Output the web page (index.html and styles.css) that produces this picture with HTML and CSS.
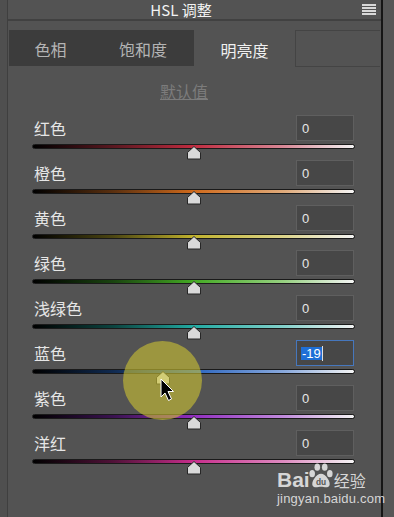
FILE: index.html
```html
<!DOCTYPE html>
<html lang="zh">

<head>
    <meta charset="UTF-8">
    <title>HSL 调整</title>
    <link rel="stylesheet" href="styles.css">
</head>

<body>
    <div class="frame">
        <div class="edge-left"></div>
        <div class="panel">
            <div class="title-bar">
                <span class="title">HSL 调整</span>
                <svg class="menu-icon" width="14" height="11" viewBox="0 0 14 11">
                    <rect x="0" y="0" width="14" height="2" fill="#d8d8d8"/>
                    <rect x="0" y="3" width="14" height="2" fill="#d8d8d8"/>
                    <rect x="0" y="6" width="14" height="2" fill="#d8d8d8"/>
                    <rect x="0" y="9" width="14" height="2" fill="#d8d8d8"/>
                </svg>
            </div>
            <div class="tabs">
                <div class="tab tab-hue">色相</div>
                <div class="tab tab-sat">饱和度</div>
                <div class="tab tab-lum active">明亮度</div>
                <div class="tab-fill"></div>
            </div>
            <div class="defaults"><span>默认值</span></div>
            <div class="rows">
                <div class="row">
                    <div class="row-head"><label>红色</label><div class="value">0</div></div>
                    <div class="slider">
                        <div class="track red"></div>
                        <svg class="thumb" style="left: 50%" width="15" height="14" viewBox="0 0 15 14"><polygon points="7.5,0.5 14,6.5 14,13 1,13 1,6.5" fill="#d9d9d9" stroke="#262626"/></svg>
                    </div>
                </div>
                <div class="row">
                    <div class="row-head"><label>橙色</label><div class="value">0</div></div>
                    <div class="slider">
                        <div class="track orange"></div>
                        <svg class="thumb" style="left: 50%" width="15" height="14" viewBox="0 0 15 14"><polygon points="7.5,0.5 14,6.5 14,13 1,13 1,6.5" fill="#d9d9d9" stroke="#262626"/></svg>
                    </div>
                </div>
                <div class="row">
                    <div class="row-head"><label>黄色</label><div class="value">0</div></div>
                    <div class="slider">
                        <div class="track yellow"></div>
                        <svg class="thumb" style="left: 50%" width="15" height="14" viewBox="0 0 15 14"><polygon points="7.5,0.5 14,6.5 14,13 1,13 1,6.5" fill="#d9d9d9" stroke="#262626"/></svg>
                    </div>
                </div>
                <div class="row">
                    <div class="row-head"><label>绿色</label><div class="value">0</div></div>
                    <div class="slider">
                        <div class="track green"></div>
                        <svg class="thumb" style="left: 50%" width="15" height="14" viewBox="0 0 15 14"><polygon points="7.5,0.5 14,6.5 14,13 1,13 1,6.5" fill="#d9d9d9" stroke="#262626"/></svg>
                    </div>
                </div>
                <div class="row">
                    <div class="row-head"><label>浅绿色</label><div class="value">0</div></div>
                    <div class="slider">
                        <div class="track aqua"></div>
                        <svg class="thumb" style="left: 50%" width="15" height="14" viewBox="0 0 15 14"><polygon points="7.5,0.5 14,6.5 14,13 1,13 1,6.5" fill="#d9d9d9" stroke="#262626"/></svg>
                    </div>
                </div>
                <div class="row">
                    <div class="row-head"><label>蓝色</label><div class="value editing"><span class="selected">-19</span><span class="caret"></span></div></div>
                    <div class="slider">
                        <div class="track blue"></div>
                        <svg class="thumb" style="left: 40.5%" width="15" height="14" viewBox="0 0 15 14"><polygon points="7.5,0.5 14,6.5 14,13 1,13 1,6.5" fill="#d9d9d9" stroke="#262626"/></svg>
                        <div class="click-spot"></div>
                        <svg class="cursor" width="15" height="24" viewBox="0 0 15 24">
                            <path d="M1 1 V19 L5 15 L8.5 22.5 L11.5 21 L8 13.5 H13.5 Z" fill="#000" stroke="#fff" stroke-width="1"/>
                        </svg>
                    </div>
                </div>
                <div class="row">
                    <div class="row-head"><label>紫色</label><div class="value">0</div></div>
                    <div class="slider">
                        <div class="track purple"></div>
                        <svg class="thumb" style="left: 50%" width="15" height="14" viewBox="0 0 15 14"><polygon points="7.5,0.5 14,6.5 14,13 1,13 1,6.5" fill="#d9d9d9" stroke="#262626"/></svg>
                    </div>
                </div>
                <div class="row">
                    <div class="row-head"><label>洋红</label><div class="value">0</div></div>
                    <div class="slider">
                        <div class="track magenta"></div>
                        <svg class="thumb" style="left: 50%" width="15" height="14" viewBox="0 0 15 14"><polygon points="7.5,0.5 14,6.5 14,13 1,13 1,6.5" fill="#d9d9d9" stroke="#262626"/></svg>
                    </div>
                </div>
            </div>
            <div class="watermark">
                <div class="brand">
                    <span class="bai">Bai</span>
                    <svg class="paw" width="26" height="27" viewBox="0 0 28 28">
                        <ellipse cx="4.5" cy="12" rx="3" ry="3.8" fill="#d6d6d6"/>
                        <ellipse cx="10" cy="5" rx="3" ry="3.8" fill="#d6d6d6"/>
                        <ellipse cx="18" cy="5" rx="3" ry="3.8" fill="#d6d6d6"/>
                        <ellipse cx="23.5" cy="12" rx="3" ry="3.8" fill="#d6d6d6"/>
                        <path d="M14 12 C19 12 25 21 23 25 C21 28 17 26 14 26 C11 26 7 28 5 25 C3 21 9 12 14 12 Z" fill="#d6d6d6"/>
                        <text x="14" y="24" text-anchor="middle" font-family="Liberation Sans, sans-serif" font-weight="bold" font-size="9" fill="#555">du</text>
                    </svg>
                    <span class="jy">经验</span>
                </div>
                <div class="site">jingyan.baidu.com</div>
            </div>
        </div>
        <div class="edge-right"></div>
    </div>
</body>

</html>
```

FILE: styles.css
```css
body {
    margin: 0;
    padding: 0;
    width: 394px;
    height: 517px;
    overflow: hidden;
    background-color: #535353;
    font-family: "Noto Sans CJK SC", "Liberation Sans", sans-serif;
}

.frame {
    display: flex;
    height: 517px;
}

.edge-left {
    width: 7px;
    background: #4f4f4f;
    border-right: 1px solid #3f3f3f;
}

.panel {
    width: 373px;
    position: relative;
}

.edge-right {
    width: 11px;
    background: #575757;
    border-left: 2px solid #161616;
}

.title-bar {
    display: flex;
    align-items: center;
    height: 19px;
    border-bottom: 2px solid #414141;
}

.title {
    flex: 1;
    text-align: center;
    padding-right: 8px;
    color: #f2f2f2;
    font-size: 15px;
    line-height: 19px;
}

.menu-icon {
    margin-right: 5px;
}

.tabs {
    display: flex;
    height: 37px;
    margin: 9px 1px 0;
}

.tab {
    display: flex;
    align-items: center;
    justify-content: center;
    box-sizing: border-box;
    height: 36px;
    padding-top: 2px;
    background: #3c3c3c;
    color: #b4b4b4;
    font-size: 16px;
}

.tab-hue {
    width: 83px;
}

.tab-sat {
    width: 102px;
}

.tab-lum {
    width: 101px;
}

.tab.active {
    height: 37px;
    background: #535353;
    color: #f0f0f0;
}

.tab-fill {
    flex: 1;
    border: 1px solid #444;
    border-right: none;
}

.defaults {
    display: flex;
    align-items: center;
    justify-content: center;
    height: 48px;
    padding-right: 21px;
}

.defaults span {
    color: #7c7c7c;
    font-size: 16px;
    text-decoration: underline;
}

.rows {
    padding: 0 26px 0 24px;
}

.row {
    height: 45px;
}

.row-head {
    display: flex;
    justify-content: space-between;
    align-items: center;
    height: 26px;
}

.row-head label {
    padding-left: 2px;
    color: #e6e6e6;
    font-size: 16px;
}

.value {
    display: flex;
    align-items: center;
    box-sizing: border-box;
    width: 58px;
    height: 26px;
    margin-right: 1px;
    padding-left: 5px;
    border: 1px solid #5f5f5f;
    background: #474747;
    color: #e8e8e8;
    font-family: "Liberation Sans", sans-serif;
    font-size: 13px;
}

.value.editing {
    padding-left: 4px;
    border-color: #4677bd;
}

.selected {
    background: #1f6fd6;
    color: #fff;
    line-height: 13px;
    padding: 0 1px;
}

.caret {
    width: 1px;
    height: 15px;
    background: #e0e0e0;
}

.slider {
    position: relative;
    height: 19px;
}

.track {
    height: 3px;
    margin-top: 3px;
    border: 1px solid #1a1a1a;
    border-radius: 3px;
}

.red {
    background: linear-gradient(90deg, #000 0%, #5a1820 25%, #c02c40 50%, #d88896 78%, #f4f4f4 100%);
}

.orange {
    background: linear-gradient(90deg, #000 0%, #5a3010 25%, #d06a1c 50%, #e0aa7a 78%, #f4f4f4 100%);
}

.yellow {
    background: linear-gradient(90deg, #000 0%, #4c4612 25%, #c0b22e 50%, #dcd48a 78%, #f4f4f4 100%);
}

.green {
    background: linear-gradient(90deg, #000 0%, #1a4410 25%, #44aa24 50%, #96d080 78%, #f4f4f4 100%);
}

.aqua {
    background: linear-gradient(90deg, #000 0%, #0c4440 25%, #22aaa2 50%, #82d0ca 78%, #f4f4f4 100%);
}

.blue {
    background: linear-gradient(90deg, #000 0%, #102a50 25%, #2c66c0 50%, #88a8dc 78%, #f4f4f4 100%);
}

.purple {
    background: linear-gradient(90deg, #000 0%, #3a1250 25%, #922ec0 50%, #c08adc 78%, #f4f4f4 100%);
}

.magenta {
    background: linear-gradient(90deg, #000 0%, #501238 25%, #c82e8c 50%, #de8ac0 78%, #f4f4f4 100%);
}

.thumb {
    position: absolute;
    top: 2px;
    transform: translateX(-50%);
}

.click-spot {
    position: absolute;
    left: 91px;
    top: -28px;
    width: 79px;
    height: 79px;
    border-radius: 50%;
    background: rgba(205, 195, 50, 0.6);
    z-index: 2;
}

.cursor {
    position: absolute;
    left: 128px;
    top: 9px;
    z-index: 3;
}

.watermark {
    position: absolute;
    left: 269px;
    top: 461px;
    color: #d6d6d6;
}

.brand {
    display: flex;
    align-items: flex-end;
    height: 31px;
}

.bai {
    font-family: "Liberation Sans", sans-serif;
    font-weight: bold;
    font-size: 21px;
    line-height: 22px;
    margin-bottom: 1px;
}

.paw {
    margin: 0 0 3px -2px;
}

.jy {
    font-size: 16px;
    line-height: 22px;
    margin-bottom: 1px;
}

.site {
    font-family: "Liberation Sans", sans-serif;
    font-size: 13px;
    line-height: 14px;
    letter-spacing: 0.2px;
}
```
